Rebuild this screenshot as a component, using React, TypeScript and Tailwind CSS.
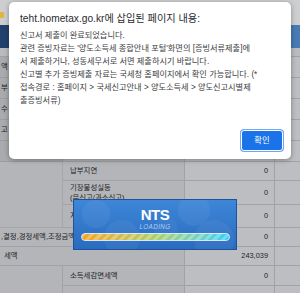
import React from 'react';

const FONT = "font-['Liberation_Sans','Noto_Sans_CJK_KR',sans-serif]";

const alertLines = [
  '신고서 제출이 완료되었습니다.',
  "관련 증빙자료는 '양도소득세 종합안내 포털'화면의 [증빙서류제출]에",
  '서 제출하거나, 성동세무서로 서면 제출하시기 바랍니다.',
  '신고별 추가 증빙제출 자료는 국세청 홈페이지에서 확인 가능합니다. (*',
  '접속경로 : 홈페이지 > 국세신고안내 > 양도소득세 > 양도신고시별제',
  '출증빙서류)',
];

const upperLabels = ['액', '부', '수', '고', ''];

// 뒤쪽 신고서 화면 (어둡게 가려진 상태)
function PageBehind() {
  return (
    <div className="flex flex-col text-[7.4px] text-[#1f2226]">
      <div className="h-[25px] bg-[#cdcecf] flex items-start">
        <span className="mt-[12px] w-[4px] h-[6px] bg-[#e2b53c]" />
      </div>
      <div className="h-[23px] bg-gradient-to-r from-[#21406b] via-[#31598e] to-[#4b7bb5]" />
      <div className="h-[9px] bg-[#b9bbbe] border-b border-[#a0a2a5]" />

      {upperLabels.map((label, i) => (
        <div key={i} className="grid grid-cols-[63px_122px_90px_25px] h-[21px]">
          <div className="bg-[#a9abae] border-b border-r border-[#9a9c9f] flex items-center pl-[1px]">
            {label}
          </div>
          <div className="bg-[#b3b5b8] border-b border-r border-[#a0a2a5]" />
          <div className="bg-[#bcbec1] border-b border-r border-[#a0a2a5]" />
          <div className="bg-[#bcbec1] border-b border-[#a0a2a5]" />
        </div>
      ))}

      <div className="grid grid-cols-[63px_122px_90px_25px] grid-rows-[19px_24px_23px_19px_19px_20px_20px]">
        <div className="row-span-3 bg-[#b3b5b8] border-b border-r border-[#a4a6a9]" />
        <div className="bg-[#b3b5b8] border-b border-r border-[#a0a2a5] flex items-center pl-[7px]">납부지연</div>
        <div className="bg-[#bcbec1] border-b border-r border-[#a0a2a5] flex items-center justify-end pr-[6px]">0</div>
        <div className="bg-[#bcbec1] border-b border-[#a0a2a5]" />

        <div className="bg-[#b3b5b8] border-b border-r border-[#a0a2a5] flex flex-col justify-center pl-[7px] leading-[10px]">
          <span>기장불성실등</span>
          <span>(무신고/과소신고)</span>
        </div>
        <div className="bg-[#bcbec1] border-b border-r border-[#a0a2a5] flex items-center justify-end pr-[6px]">0</div>
        <div className="bg-[#bcbec1] border-b border-[#a0a2a5]" />

        <div className="bg-[#b3b5b8] border-b border-r border-[#a0a2a5] flex items-center pl-[7px]">지급명세서 미제출</div>
        <div className="bg-[#bcbec1] border-b border-r border-[#a0a2a5] flex items-center justify-end pr-[6px]">0</div>
        <div className="bg-[#bcbec1] border-b border-[#a0a2a5]" />

        <div className="col-span-2 bg-[#b3b5b8] border-b border-r border-[#a0a2a5] flex items-center whitespace-nowrap pl-[1px]">
          ,결정,경정세액,조정금액
        </div>
        <div className="bg-[#bcbec1] border-b border-r border-[#a0a2a5] flex items-center justify-end pr-[6px]">0</div>
        <div className="bg-[#bcbec1] border-b border-[#a0a2a5]" />

        <div className="col-span-2 bg-[#b3b5b8] border-b border-r border-[#a0a2a5] flex items-center whitespace-nowrap pl-[4px]">
          세액
        </div>
        <div className="bg-[#bcbec1] border-b border-r border-[#a0a2a5] flex items-center justify-end pr-[6px]">243,039</div>
        <div className="bg-[#bcbec1] border-b border-[#a0a2a5]" />

        <div className="row-span-2 bg-[#b3b5b8] border-b border-r border-[#a0a2a5]" />
        <div className="bg-[#b3b5b8] border-b border-r border-[#a0a2a5] flex items-center pl-[7px]">소득세감면세액</div>
        <div className="bg-[#bcbec1] border-b border-r border-[#a0a2a5] flex items-center justify-end pr-[6px]">0</div>
        <div className="bg-[#bcbec1] border-b border-[#a0a2a5]" />

        <div className="bg-[#b3b5b8] border-b border-r border-[#a0a2a5]" />
        <div className="bg-[#bcbec1] border-b border-r border-[#a0a2a5]" />
        <div className="bg-[#bcbec1] border-b border-[#a0a2a5]" />
      </div>
    </div>
  );
}

// 브라우저 알림창
function AlertDialog() {
  return (
    <div className="absolute left-[9px] top-[2px] w-[282px] h-[157px] rounded-[5px] bg-white shadow-[0_1px_5px_rgba(0,0,0,0.35)] flex flex-col pl-[11px] pr-[8px] pt-[10px] pb-[8px]">
      <div className="text-[10.2px] leading-[13px] text-[#2a2c30] whitespace-nowrap">
        teht.hometax.go.kr에 삽입된 페이지 내용:
      </div>
      <div className="mt-[4px] text-[8.2px] leading-[13px] text-[#3c4043]">
        {alertLines.map((line, i) => (
          <div key={i} className="whitespace-nowrap">
            {line}
          </div>
        ))}
      </div>
      <div className="mt-auto flex justify-end">
        <button className="w-[42px] h-[21px] rounded-[3px] bg-[#1a73e8] border border-white shadow-[0_0_0_1px_#6fa7f1] text-white text-[8.3px] leading-none">
          확인
        </button>
      </div>
    </div>
  );
}

// NTS 로딩 박스
function LoadingBox() {
  return (
    <div className="absolute left-[73px] top-[199px] w-[164px] h-[51px] border border-[#1e5299] bg-gradient-to-b from-[#3d86d8] to-[#2a6bbf] overflow-hidden flex flex-col items-center">
      <svg className="absolute inset-0" width="164" height="51" viewBox="0 0 164 51">
        <circle cx="22" cy="14" r="14" fill="#ffffff" opacity="0.06" />
        <circle cx="48" cy="38" r="18" fill="#ffffff" opacity="0.05" />
        <circle cx="120" cy="10" r="16" fill="#ffffff" opacity="0.06" />
        <circle cx="140" cy="40" r="20" fill="#ffffff" opacity="0.05" />
        <circle cx="92" cy="30" r="12" fill="#ffffff" opacity="0.04" />
      </svg>
      <div className="relative mt-[7px] text-[15px] leading-[15px] font-bold tracking-[-0.5px] text-white">NTS</div>
      <div className="relative mt-[1px] text-[6.3px] leading-[7px] italic tracking-[0.4px] text-[#b3cff0]">LOADING</div>
      <div className="relative mt-[3px] w-[149px] h-[8px] rounded-full border border-[#d4e9fb] bg-gradient-to-r from-[#f6a21b] via-[#a9cf66] to-[#2ccef5] overflow-hidden">
        <div className="absolute inset-0 bg-[repeating-linear-gradient(135deg,rgba(255,255,255,0.28)_0_3px,transparent_3px_6px)]" />
      </div>
    </div>
  );
}

export default function App() {
  return (
    <div className={`relative w-[300px] h-[293px] overflow-hidden bg-[#b9bbbe] ${FONT}`}>
      <PageBehind />
      <AlertDialog />
      <LoadingBox />
    </div>
  );
}
